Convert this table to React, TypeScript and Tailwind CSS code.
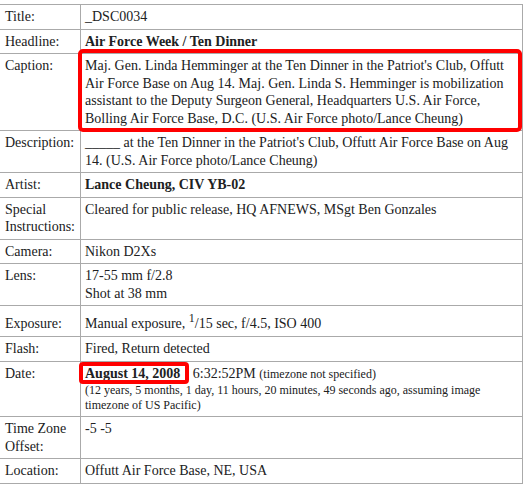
type Row = { label: React.ReactNode; value: React.ReactNode; pad?: string };

const rows: Row[] = [
  { label: 'Title:', value: '_DSC0034' },
  { label: 'Headline:', value: <b>Air Force Week / Ten Dinner</b> },
  {
    label: 'Caption:',
    value:
      "Maj. Gen. Linda Hemminger at the Ten Dinner in the Patriot's Club, Offutt Air Force Base on Aug 14. Maj. Gen. Linda S. Hemminger is mobilization assistant to the Deputy Surgeon General, Headquarters U.S. Air Force, Bolling Air Force Base, D.C. (U.S. Air Force photo/Lance Cheung)",
  },
  {
    label: 'Description:',
    value:
      "_____ at the Ten Dinner in the Patriot's Club, Offutt Air Force Base on Aug 14. (U.S. Air Force photo/Lance Cheung)",
  },
  { label: 'Artist:', value: <b>Lance Cheung, CIV YB-02</b> },
  { label: 'Special Instructions:', value: 'Cleared for public release, HQ AFNEWS, MSgt Ben Gonzales' },
  { label: 'Camera:', value: 'Nikon D2Xs' },
  {
    label: 'Lens:',
    value: (
      <>
        17-55 mm f/2.8
        <br />
        Shot at 38 mm
      </>
    ),
  },
  {
    label: 'Exposure:',
    pad: 'pb-[4px]',
    value: (
      <>
        Manual exposure, <sup className="static align-super text-[12px] leading-normal">1</sup>/15 sec, f/4.5, ISO 400
      </>
    ),
  },
  { label: 'Flash:', value: 'Fired, Return detected' },
  {
    label: 'Date:',
    value: (
      <>
        <b>August 14, 2008</b> <span className="ml-[9px]">6:32:52PM</span>{' '}
        <span className="text-[12px]">(timezone not specified)</span>
        <span className="block text-[12px] leading-[15px]">
          (12 years, 5 months, 1 day, 11 hours, 20 minutes, 49 seconds ago, assuming image timezone of US Pacific)
        </span>
      </>
    ),
  },
  { label: 'Time Zone Offset:', value: '-5 -5' },
  { label: 'Location:', value: 'Offutt Air Force Base, NE, USA' },
];

export default function App() {
  return (
    <div className="relative h-[485px] w-[524px] overflow-hidden bg-white font-['Liberation_Serif',serif] text-[14px] leading-[17.5px] text-[#202122]">
      <table className="-ml-px mt-1 w-[524px] table-fixed border-collapse">
        <colgroup>
          <col className="w-[81px]" />
          <col />
        </colgroup>
        <tbody>
          {rows.map((row, i) => (
            <tr key={i}>
              <td className="border border-[#aaa] px-[5px] py-[3px] align-baseline">{row.label}</td>
              <td className={`border border-[#aaa] px-[4px] py-[3px] align-baseline ${row.pad ?? ''}`}>{row.value}</td>
            </tr>
          ))}
        </tbody>
      </table>

      {/* annotation boxes */}
      <div className="pointer-events-none absolute left-[78px] top-[49px] h-[83px] w-[444px] rounded-[5px] border-[4px] border-[#f00]" />
      <div className="pointer-events-none absolute left-[79px] top-[362px] h-[22px] w-[110px] rounded-[4px] border-[4px] border-[#f00]" />
    </div>
  );
}
